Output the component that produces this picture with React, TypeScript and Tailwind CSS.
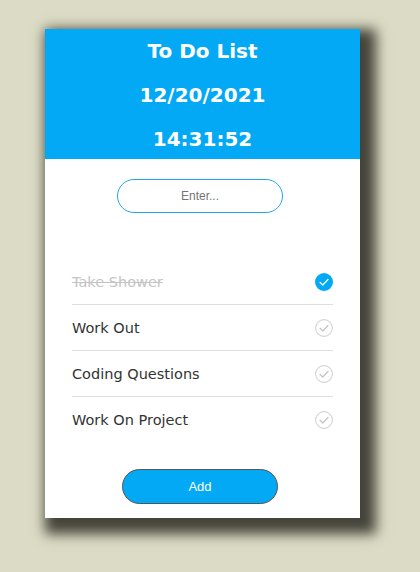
import React from "react";

type Item = { text: string; done: boolean };

const items: Item[] = [
  { text: "Take Shower", done: true },
  { text: "Work Out", done: false },
  { text: "Coding Questions", done: false },
  { text: "Work On Project", done: false },
];

function CheckIcon({ done }: { done: boolean }) {
  if (done) {
    return (
      <svg width="18" height="18" viewBox="0 0 18 18">
        <circle cx="9" cy="9" r="9" fill="#03a9f4" />
        <polyline points="5,9.3 7.8,12 13,6.5" fill="none" stroke="#ffffff" strokeWidth="1.2" strokeLinecap="round" strokeLinejoin="round" />
      </svg>
    );
  }
  return (
    <svg width="18" height="18" viewBox="0 0 18 18">
      <circle cx="9" cy="9" r="8.4" fill="none" stroke="#d4d4d4" strokeWidth="1.1" />
      <polyline points="5,9.3 7.8,12 13,6.5" fill="none" stroke="#c4c4c4" strokeWidth="1.2" strokeLinecap="round" strokeLinejoin="round" />
    </svg>
  );
}

export default function App() {
  return (
    <div className="min-h-[572px] w-[420px] bg-[#dcdcc6] pt-[29px]">
      <div className="ml-[45px] w-[315px] bg-white shadow-[8px_8px_12px_8px_#45443a]">
        <div className="h-[130px] bg-[#03a9f4] text-center text-white font-bold text-[20px] leading-[44px] [font-family:'DejaVu_Sans',sans-serif]">
          <div>To Do List</div>
          <div>12/20/2021</div>
          <div>14:31:52</div>
        </div>
        <div className="flex justify-center pt-[20px] pr-[5px]">
          <input
            placeholder="Enter..."
            className="h-[34px] w-[166px] rounded-full border border-[#1fa6ee] bg-white text-center text-[12px] text-[#333] placeholder:text-[#757575] outline-none [font-family:'Liberation_Sans',Arial,sans-serif]"
          />
        </div>
        <ul className="mx-[27px] mt-[46px] [font-family:'DejaVu_Sans',sans-serif]">
          {items.map((it, i) => (
            <li
              key={it.text}
              className={`flex h-[46px] items-center justify-between ${i < items.length - 1 ? "border-b border-[#dedede]" : ""}`}
            >
              <span
                className={`pt-[2px] text-[14.5px] ${it.done ? "text-[#c4c4c4] line-through" : "text-[#333333]"}`}
              >
                {it.text}
              </span>
              <CheckIcon done={it.done} />
            </li>
          ))}
        </ul>
        <div className="flex justify-center pt-[26px] pb-[14px] pr-[5px]">
          <button className="h-[35px] w-[156px] rounded-full border border-[#555] bg-[#03a9f4] text-[13px] text-white [font-family:'Liberation_Sans',Arial,sans-serif]">
            Add
          </button>
        </div>
      </div>
    </div>
  );
}
